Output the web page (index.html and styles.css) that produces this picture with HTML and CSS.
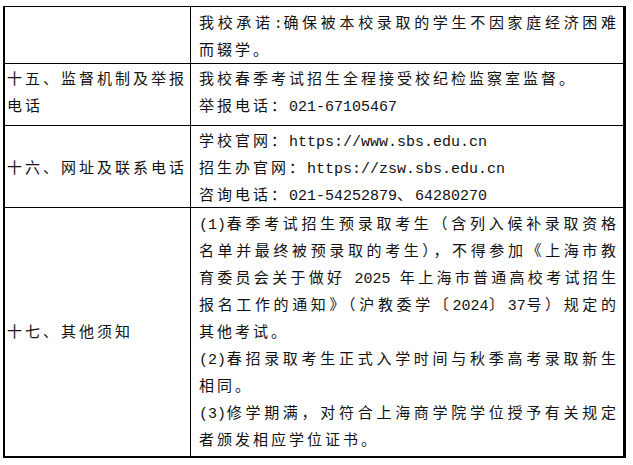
FILE: index.html
```html
<!DOCTYPE html>
<html lang="zh-CN">
<head>
<meta charset="utf-8">
<title>招生章程</title>
<link rel="stylesheet" href="styles.css">
</head>
<body>
<table class="info">
  <colgroup><col class="c-k"><col class="c-v"></colgroup>
  <tbody>
    <tr class="r1">
      <td class="k"></td>
      <td class="v">
        <span class="ln j">我校承诺<span class="en">:</span>确保被本校录取的学生不因家庭经济困难</span>
        <span class="ln">而辍学。</span>
      </td>
    </tr>
    <tr class="r2">
      <td class="k">十五、监督机制及举报<br>电话</td>
      <td class="v">
        <span class="ln">我校春季考试招生全程接受校纪检监察室监督。</span>
        <span class="ln">举报电话：<span class="en">021-67105467</span></span>
      </td>
    </tr>
    <tr class="r3">
      <td class="k mid">十六、网址及联系电话</td>
      <td class="v">
        <span class="ln">学校官网：<span class="en">https://www.sbs.edu.cn</span></span>
        <span class="ln">招生办官网：<span class="en">https://zsw.sbs.edu.cn</span></span>
        <span class="ln">咨询电话：<span class="en">021-54252879</span>、<span class="en">64280270</span></span>
      </td>
    </tr>
    <tr class="r4">
      <td class="k mid">十七、其他须知</td>
      <td class="v">
        <span class="ln j"><span class="en">(1)</span>春季考试招生预录取考生（含列入候补录取资格</span>
        <span class="ln j">名单并最终被预录取的考生），不得参加《上海市教</span>
        <span class="ln j">育委员会关于做好<span class="en"> 2025 </span>年上海市普通高校考试招生</span>
        <span class="ln j">报名工作的通知》（沪教委学〔<span class="en">2024</span>〕<span class="en">37</span>号）规定的</span>
        <span class="ln">其他考试。</span>
        <span class="ln j"><span class="en">(2)</span>春招录取考生正式入学时间与秋季高考录取新生</span>
        <span class="ln">相同。</span>
        <span class="ln j"><span class="en">(3)</span>修学期满，对符合上海商学院学位授予有关规定</span>
        <span class="ln">者颁发相应学位证书。</span>
      </td>
    </tr>
  </tbody>
</table>
</body>
</html>
```
FILE: styles.css
```css
html, body {
  margin: 0;
  padding: 0;
  background: #ffffff;
}

body {
  font-family: "Noto Sans CJK SC", "Noto Sans CJK JP", sans-serif;
  font-size: 15px;
  line-height: 27px;
  color: #111111;
  letter-spacing: 3px;
}

.info {
  border-collapse: separate;
  border-spacing: 0;
  table-layout: fixed;
  width: 623px;
  margin: 6px 0 0 3px;
  border-top: 1px solid #000;
  border-left: 2px solid #000;
  border-right: 3px solid #000;
  border-bottom: 2px solid #000;
}

.c-k { width: 186px; }
.c-v { width: 432px; }

.info td {
  padding: 0;
  vertical-align: top;
}

.info tr + tr td {
  border-top: 1px solid #000;
}

.info .k {
  border-right: 1px solid #000;
  padding-left: 2px;
  white-space: nowrap;
}

.info .v {
  padding-left: 8px;
  padding-right: 4px;
}

.info .mid {
  vertical-align: middle;
}

.r1 td { padding-top: 1px; padding-bottom: 1px; }
.r2 td { padding-bottom: 7px; }
.r3 td { padding-top: 0; }
.r4 td { padding-top: 1px; padding-bottom: 4px; }

.ln {
  display: block;
  height: 27px;
  white-space: nowrap;
}

.j {
  white-space: normal;
  text-align: justify;
  text-align-last: justify;
}

.en {
  font-family: "Liberation Mono", monospace;
  letter-spacing: 0;
  line-height: 15px;
}
```
